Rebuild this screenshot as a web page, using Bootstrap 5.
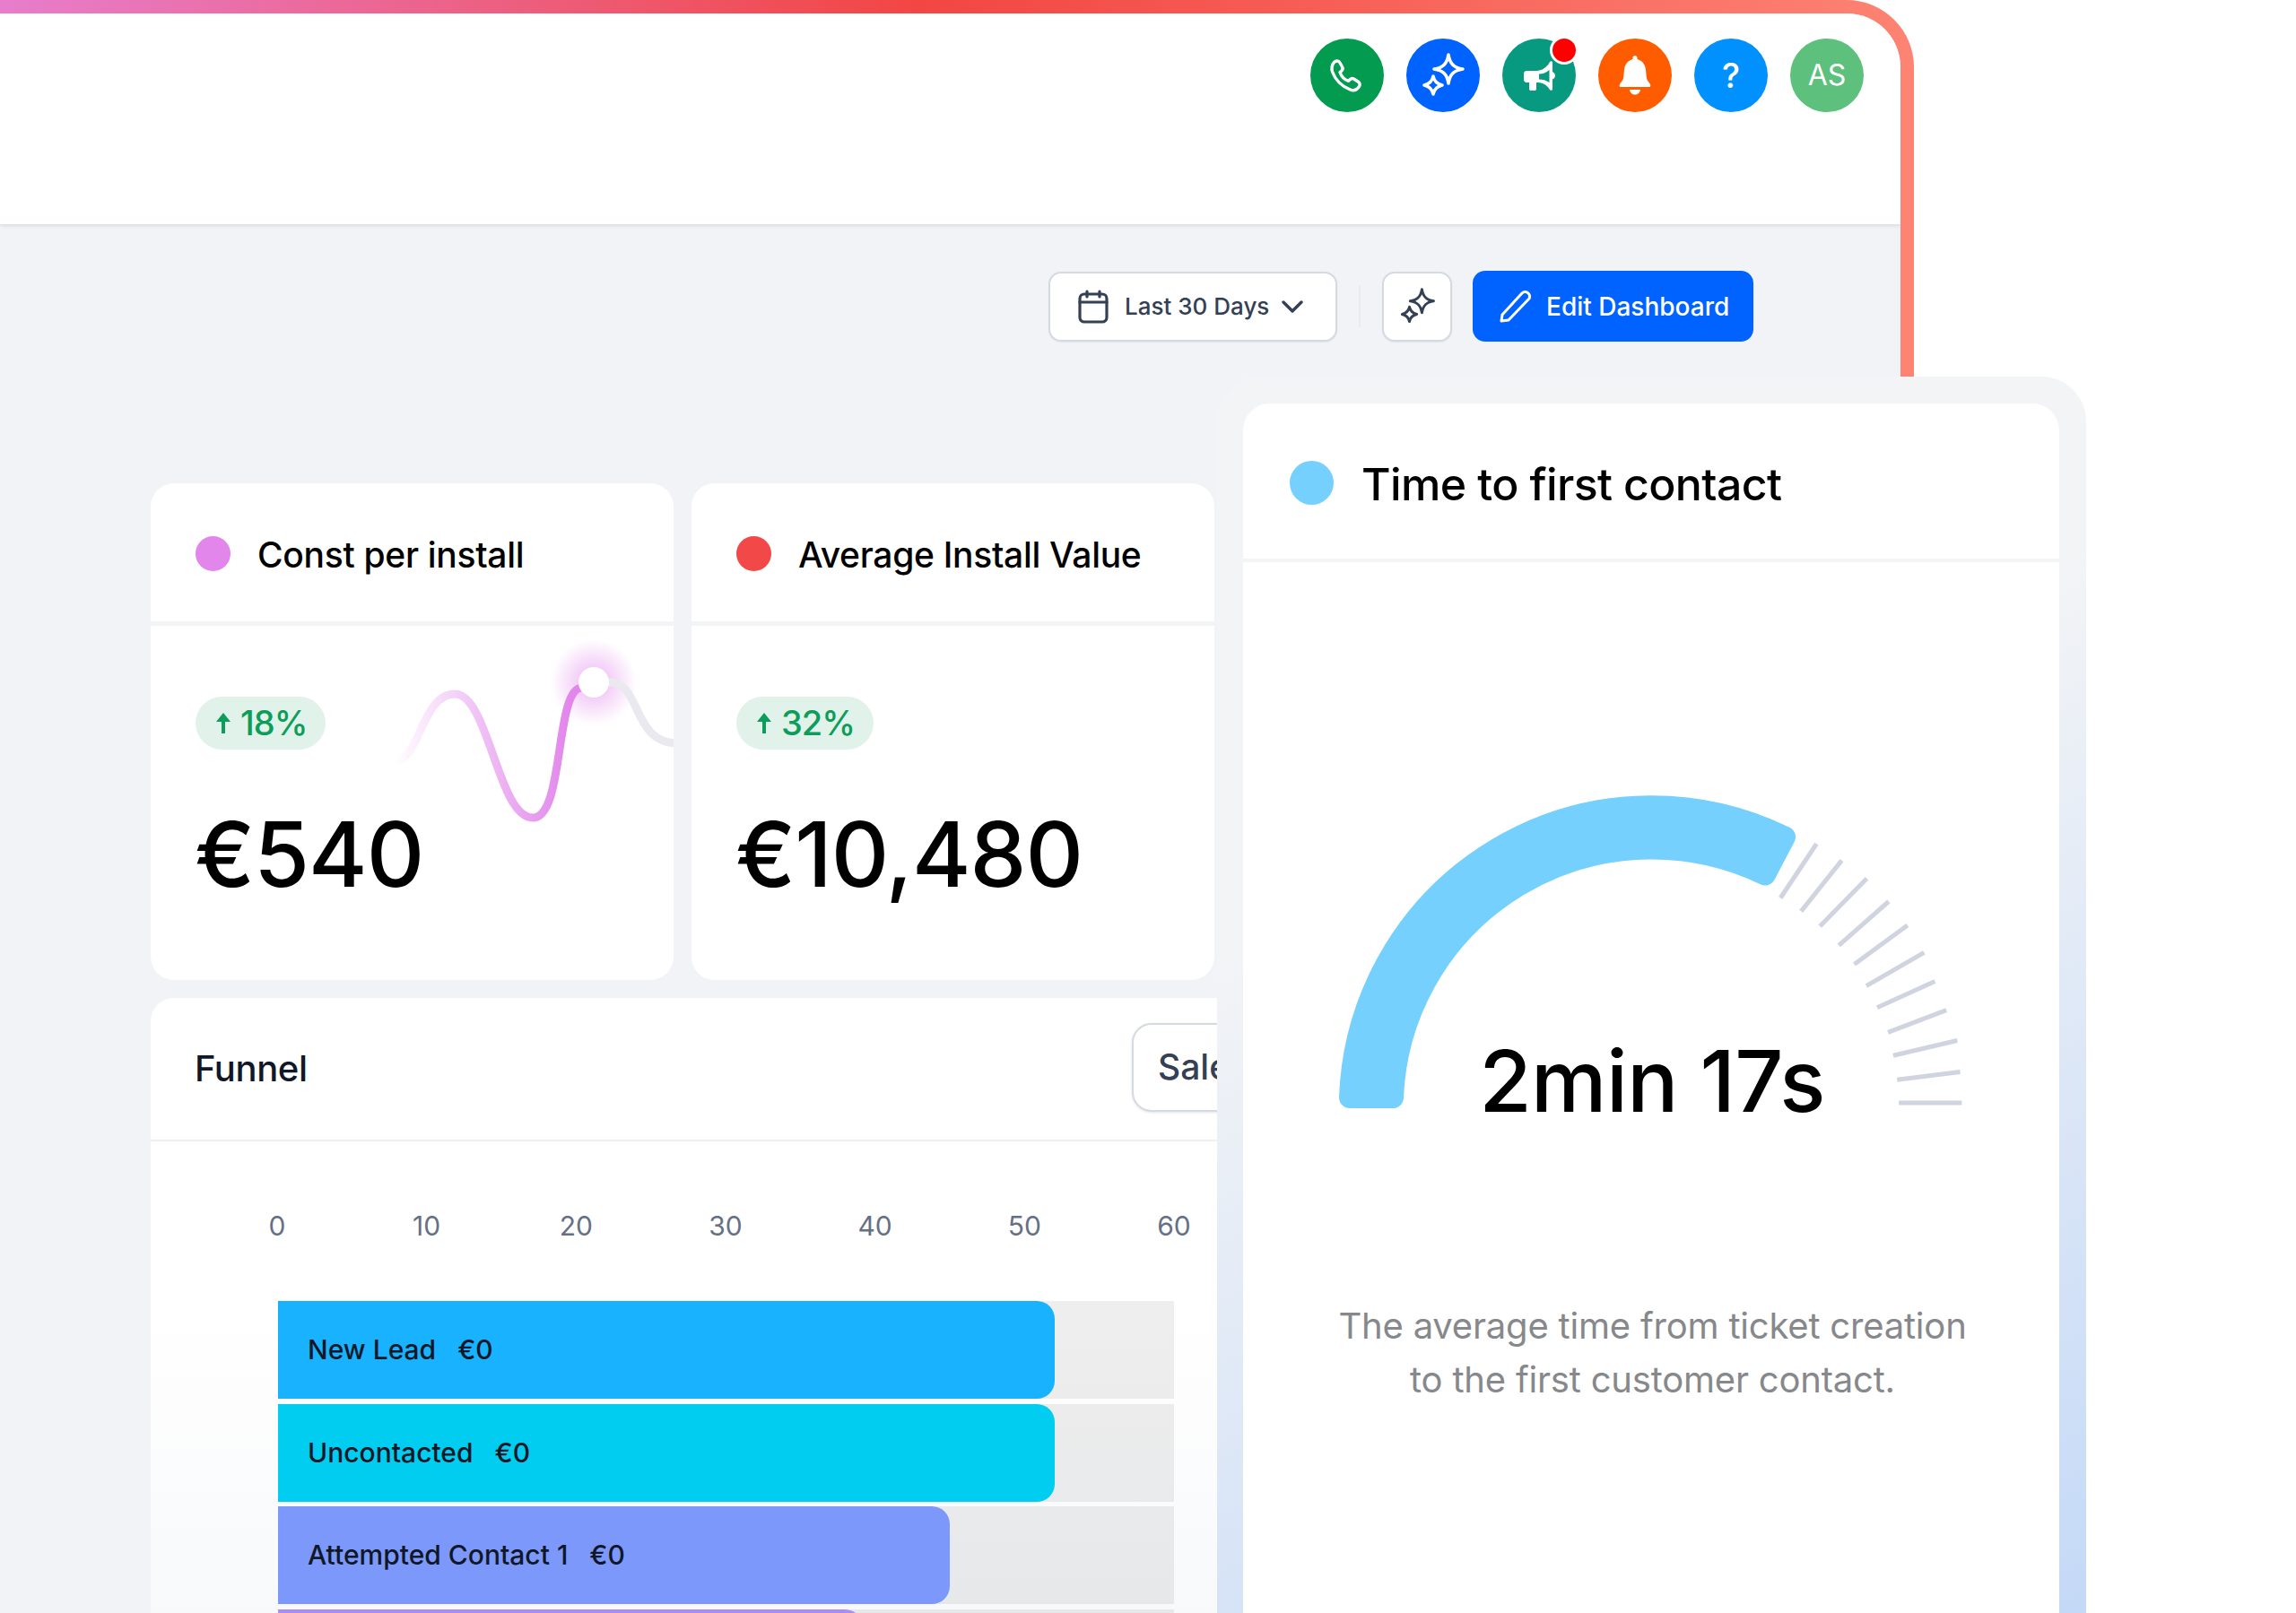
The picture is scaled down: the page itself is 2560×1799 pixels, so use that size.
<!DOCTYPE html>
<html lang="en">
<head>
  <meta charset="UTF-8">
  <meta name="viewport" content="width=device-width, initial-scale=1">
  <title>Dashboard</title>
  <link href="https://cdn.jsdelivr.net/npm/bootstrap@5.3.3/dist/css/bootstrap.min.css" rel="stylesheet">
  <style>
    html, body { height: 100%; }
    body { font-family: "Inter", "Liberation Sans", sans-serif; background: #fff; overflow: hidden; position: relative; }

    /* gradient frame round the app */
    .app-frame { width: 2134px; height: 1799px; padding: 15px 15px 0 0; border-top-right-radius: 75px; background: linear-gradient(90deg, #e77dcc 0, #f24642 1024px, #fd8373 2134px); }
    .app-inner { height: 100%; background: #f2f3f7; border-top-right-radius: 60px; overflow: hidden; }
    .top-bar { height: 235px; padding: 28px 41px 0 0; background: #fff; box-shadow: 0 2px 4px rgba(16, 24, 40, .1); gap: 25px; }
    .round-btn { width: 82px; height: 82px; color: #fff; }
    .round-btn svg { width: 82px; height: 82px; }
    .rb-phone { background: #029b4f; }
    .rb-spark { background: #0062ff; }
    .rb-mega { background: #089a80; }
    .rb-bell { background: #ff5c00; }
    .rb-help { background: #0091ff; font-size: 38px; font-weight: 500; }
    .rb-user { background: #5dc07d; font-size: 32px; }
    .notify-dot { width: 32px; height: 32px; left: 53px; top: -3px; background: #f00; border: 3px solid #fff; }

    .tool-row { padding: 52px 164px 0 0; align-items: center; }
    .tool-btn { height: 78px; background: #fff; border: 2px solid #d5d9e2; border-radius: 14px; color: #344054; font-size: 26px; font-weight: 500; box-shadow: 0 1px 2px rgba(16, 24, 40, .06); padding: 0; }
    .date-btn { width: 322px; gap: 18px; padding-left: 31px; }
    .date-btn .chev { margin-left: -4px; }
    .tool-sep { width: 2px; height: 47px; background: #e9ebf0; margin: 0 24px; }
    .spark-btn { width: 78px; }
    .edit-btn { width: 313px; height: 79px; margin-left: 23px; background: #0062ff; border: 0; border-radius: 14px; color: #fff; font-size: 28px; font-weight: 500; gap: 16px; padding: 0 0 0 30px; }

    .dash-wrap { padding: 158px 0 0 168px; width: 1408px; }
    .kpi-grid { grid-template-columns: 583px 583px; gap: 20px; }
    .kpi-card { height: 554px; border: 0; border-radius: 26px; overflow: hidden; }
    .kpi-head { height: 151px; padding: 3px 50px 0; gap: 30px; font-size: 39px; font-weight: 500; color: #000; border-bottom: 5px solid #f3f4f6; box-sizing: content-box; letter-spacing: -.3px; }
    .kpi-title { padding-top: 3px; }
    .legend-dot { width: 39px; height: 39px; }
    .kpi-pad { padding: 79px 50px 0; }
    .trend-pill { height: 59px; padding: 0 21px; gap: 9px; background: #e1f2ea; color: #0c9d5a; font-size: 38px; font-weight: 500; letter-spacing: -1px; }
    .kpi-num { font-size: 100px; font-weight: 500; line-height: 1; margin: 67px 0 0 -1px; color: #000; letter-spacing: -1px; }
    .spark-line { left: 262px; top: 162px; width: 321px; height: 240px; }

    .funnel-card { width: 1240px; margin-top: 20px; height: 800px; border: 0; border-radius: 26px 0 0 0; overflow: hidden; background: linear-gradient(180deg, #fff 340px, #f8f9fb 680px); }
    .funnel-head { height: 160px; padding: 0 0 0 49px; border-bottom: 2px solid #eef0f3; font-size: 40px; font-weight: 500; color: #101828; letter-spacing: -.4px; }
    .sale-select { width: 300px; height: 99px; background: #fff; border: 2px solid #d5d9e2; border-radius: 22px; padding-left: 27px; margin: -3px -154px 0 0; font-size: 39px; color: #344054; box-shadow: 0 1px 3px rgba(16, 24, 40, .12); letter-spacing: 0; }
    .funnel-chart { width: 999px; margin-left: 142px; padding-top: 77px; }
    .axis-row { height: 34px; margin: 0 0 67px -1px; font-size: 30px; color: #667085; line-height: 34px; }
    .axis-row span { width: 0; }
    .bar-rows { gap: 5.6px; }
    .bar-track { --bs-progress-bg: rgba(0, 0, 0, .067); height: 109px; border-radius: 0; font-size: 30px; }
    .bar-fill { padding-left: 33px; gap: 24px; color: #101828; font-weight: 500; border-radius: 0 20px 20px 0; }

    /* card floating over the dashboard */
    .float-card { left: 1357px; top: 420px; width: 969px; height: 1379px; padding: 30px 30px 0 29px; border-radius: 50px 50px 0 0; background: linear-gradient(155deg, #f3f4f6 35%, #c4d9f7 100%); }
    .float-inner { height: 100%; border: 0; border-radius: 30px 30px 0 0; overflow: hidden; }
    .float-head { height: 170px; padding: 3px 52px 0; gap: 31px; font-size: 50px; font-weight: 500; color: #000; border-bottom: 4px solid #f3f4f6; box-sizing: content-box; letter-spacing: -.62px; }
    .float-title { padding-top: 4px; }
    .float-dot { width: 49px; height: 49px; background: #75d0fd; }
    .gauge-box { width: 720px; height: 380px; margin: 243px 0 0 94px; }
    .gauge-box svg { width: 720px; height: 380px; display: block; }
    .gauge-num { left: 0; width: 724px; top: 279px; font-size: 95px; font-weight: 500; line-height: 1.2; color: #000; letter-spacing: -.6px; }
    .gauge-note { margin-top: 199px; font-size: 40px; line-height: 60px; color: #87888c; letter-spacing: -.2px; padding-left: 3px; }
  </style>
</head>
<body>
  <svg width="0" height="0" class="position-absolute">
    <symbol id="sparkles" viewBox="0 0 82 82">
      <path fill="none" stroke="currentColor" stroke-width="3.6" stroke-linejoin="round" d="M47 18C48.500 28 53 32.500 63 34C53 35.500 48.500 40 47 50C45.500 40 41 35.500 31 34C41 32.500 45.500 28 47 18Z"/>
      <path fill="none" stroke="currentColor" stroke-width="3.6" stroke-linejoin="round" d="M30 42C31 47.500 34 50.500 40 52C34 53.500 31 56.500 30 62C29 56.500 26 53.500 20 52C26 50.500 29 47.500 30 42Z"/>
    </symbol>
  </svg>

  <div class="app-frame">
    <div class="app-inner">
      <!-- header -->
      <div class="top-bar d-flex justify-content-end align-items-start position-relative">
        <div class="round-btn rb-phone rounded-circle">
          <svg viewBox="0 0 82 82"><path fill="none" stroke="#fff" stroke-width="3.4" stroke-linejoin="round" d="M26.5 26.5C28.5 24.5 31.5 24.5 33 27L35.5 31.5C36.5 33.2 36 35 34.6 36.2L33 37.5C34.5 42 38 45.8 42.5 47.4L44.2 45.7C45.5 44.4 47.2 44.2 48.8 45.2L53.2 48C55.5 49.5 55.8 52.2 54 54.2L52.5 55.8C50.5 57.8 47.5 58.3 44.5 57C34.5 53 28 46.5 24.5 37C23.4 33.8 24 29 26.5 26.5Z"/></svg>
        </div>
        <div class="round-btn rb-spark rounded-circle">
          <svg><use href="#sparkles"/></svg>
        </div>
        <div class="round-btn rb-mega rounded-circle position-relative">
          <svg viewBox="0 0 82 82"><path fill="#fff" fill-rule="evenodd" d="M27 36H38C44 36 50 32 53 26C54 24.5 56 25 56 27V37C58 38 59 40 59 41.5C59 43 58 44.5 56 45.5V56C56 58 54 58.5 53 57C50 52 46 49.5 40 49H38V56C38 57.5 37 58 36 58H32C31 58 30 57.5 30 56V49H27C25 49 24 47.5 24 46V39C24 37.5 25 36 27 36ZM41 39.5C45 39.5 49 38 52.5 35V49C49 46.5 45 45.5 41 45.5Z"/></svg>
          <span class="notify-dot rounded-circle position-absolute"></span>
        </div>
        <div class="round-btn rb-bell rounded-circle">
          <svg viewBox="0 0 82 82"><path fill="#fff" d="M41 19C42.500 19 43.500 20 43.500 21.500V23C49 24.500 52.500 29 53 35L53.800 43C54 45.500 55 47 57 49.500C58.500 51.500 59 54 57 54H25C23 54 23.500 51.500 25 49.500C27 47 28 45.500 28.200 43L29 35C29.500 29 33 24.500 38.500 23V21.500C38.500 20 39.500 19 41 19ZM35 57H47C46.500 60.500 44 62.500 41 62.500C38 62.500 35.500 60.500 35 57Z"/></svg>
        </div>
        <div class="round-btn rb-help rounded-circle d-flex align-items-center justify-content-center">?</div>
        <div class="round-btn rb-user rounded-circle d-flex align-items-center justify-content-center">AS</div>
      </div>

      <!-- toolbar -->
      <div class="tool-row d-flex justify-content-end">
        <button type="button" class="btn tool-btn date-btn d-flex align-items-center">
          <svg width="34" height="38" viewBox="0 0 34 38" fill="none" stroke="#344054" stroke-width="3.2" stroke-linecap="round" stroke-linejoin="round"><rect x="2" y="5" width="30" height="31" rx="5"/><path d="M2 14H32M10 2V8M24 2V8"/></svg>
          <span>Last 30 Days</span>
          <svg class="chev" width="24" height="14" viewBox="0 0 24 14" fill="none" stroke="#344054" stroke-width="3.4" stroke-linecap="round" stroke-linejoin="round"><path d="M2 2L12 12L22 2"/></svg>
        </button>
        <span class="tool-sep"></span>
        <button type="button" class="btn tool-btn spark-btn d-flex align-items-center justify-content-center">
          <svg width="67" height="67"><use href="#sparkles"/></svg>
        </button>
        <button type="button" class="btn edit-btn d-flex align-items-center">
          <svg width="36" height="36" viewBox="0 0 36 36" fill="none" stroke="#fff" stroke-width="3" stroke-linejoin="round"><path d="M2 34L3 27L25 3C27 1 30 1 32 3C34 5 34 7 33 9L10 33Z"/></svg>
          <span>Edit Dashboard</span>
        </button>
      </div>

      <div class="dash-wrap">
        <div class="kpi-grid d-grid">
          <div class="card kpi-card position-relative">
            <div class="kpi-head d-flex align-items-center"><span class="legend-dot rounded-circle" style="background:#e286eb"></span><span class="kpi-title">Const per install</span></div>
            <div class="kpi-pad">
              <span class="trend-pill d-inline-flex align-items-center rounded-pill">
                <svg width="20" height="23" viewBox="0 0 20 23" fill="#0c9d5a"><path d="M10 0L18 10H12V23H8V10H2Z"/></svg>18%</span>
              <div class="kpi-num">€540</div>
            </div>
            <svg class="spark-line position-absolute" viewBox="0 0 321 240" fill="none">
              <defs>
                <linearGradient id="sparkFade" gradientUnits="userSpaceOnUse" x1="10" y1="0" x2="205" y2="0">
                  <stop offset="0" stop-color="#e286eb" stop-opacity="0"/>
                  <stop offset=".35" stop-color="#e286eb" stop-opacity=".38"/>
                  <stop offset="1" stop-color="#e286eb"/>
                </linearGradient>
                <radialGradient id="sparkGlow">
                  <stop offset=".3" stop-color="#e28bec" stop-opacity=".45"/>
                  <stop offset="1" stop-color="#e28bec" stop-opacity="0"/>
                </radialGradient>
              </defs>
              <circle cx="232" cy="60" r="48" fill="url(#sparkGlow)"/>
              <path stroke="url(#sparkFade)" stroke-width="9" d="M10 148C38 148 40 73 77 73C115 73 125 211 164 211C200 211 188 66 219 66"/>
              <path stroke="#e9e9ef" stroke-width="9" stroke-linecap="round" d="M250 60C285 60 275 128 325 128"/>
              <circle cx="232" cy="60" r="17" fill="#fff"/>
            </svg>
          </div>
          <div class="card kpi-card">
            <div class="kpi-head d-flex align-items-center"><span class="legend-dot rounded-circle" style="background:#f24848"></span><span class="kpi-title">Average Install Value</span></div>
            <div class="kpi-pad">
              <span class="trend-pill d-inline-flex align-items-center rounded-pill">
                <svg width="20" height="23" viewBox="0 0 20 23" fill="#0c9d5a"><path d="M10 0L18 10H12V23H8V10H2Z"/></svg>32%</span>
              <div class="kpi-num">€10,480</div>
            </div>
          </div>
        </div>

        <div class="card funnel-card">
          <div class="funnel-head d-flex align-items-center justify-content-between">
            <span>Funnel</span>
            <div class="sale-select d-flex align-items-center">Sales</div>
          </div>
          <div class="funnel-chart">
            <div class="axis-row d-flex justify-content-between">
              <span class="d-flex justify-content-center">0</span>
              <span class="d-flex justify-content-center">10</span>
              <span class="d-flex justify-content-center">20</span>
              <span class="d-flex justify-content-center">30</span>
              <span class="d-flex justify-content-center">40</span>
              <span class="d-flex justify-content-center">50</span>
              <span class="d-flex justify-content-center">60</span>
            </div>
            <div class="bar-rows d-flex flex-column">
              <div class="progress bar-track"><div class="progress-bar bar-fill flex-row align-items-center justify-content-start" style="width:86.7%;background:#18b2ff"><span>New Lead</span><span>€0</span></div></div>
              <div class="progress bar-track"><div class="progress-bar bar-fill flex-row align-items-center justify-content-start" style="width:86.7%;background:#00cdf0"><span>Uncontacted</span><span>€0</span></div></div>
              <div class="progress bar-track"><div class="progress-bar bar-fill flex-row align-items-center justify-content-start" style="width:75%;background:#7c98fa"><span>Attempted Contact 1</span><span>€0</span></div></div>
              <div class="progress bar-track"><div class="progress-bar bar-fill flex-row align-items-center justify-content-start" style="width:65.3%;background:#a98cf6"></div></div>
            </div>
          </div>
        </div>
      </div>
    </div>
  </div>

  <!-- time to first contact -->
  <div class="float-card position-absolute">
    <div class="card float-inner">
      <div class="float-head d-flex align-items-center"><span class="float-dot rounded-circle"></span><span class="float-title">Time to first contact</span></div>
      <div class="gauge-box position-relative">
        <svg viewBox="1480 870 720 380">
          <path fill="#75d0fd" stroke="#75d0fd" stroke-width="24" stroke-linejoin="round" d="M1505 1224A337 337 0 0 1 1990 933.500L1968 975.500A289 289 0 0 0 1553 1224Z"/>
          <g stroke="#d0d3e0" stroke-width="5">
            <path d="M2025.400 941.200L1985.200 1001.500"/>
            <path d="M2053.500 959.600L2008.200 1016.400"/>
            <path d="M2081.500 979.700L2029.200 1033.100"/>
            <path d="M2105.800 1005.500L2050.300 1054.300"/>
            <path d="M2126.800 1031.900L2067.500 1075.600"/>
            <path d="M2145.300 1062.400L2080.900 1099.700"/>
            <path d="M2157.400 1094.500L2093 1123.800"/>
            <path d="M2170.200 1126.700L2105.100 1151.300"/>
            <path d="M2182.300 1160.500L2110.900 1177.200"/>
            <path d="M2185.500 1195.500L2115.300 1204.200"/>
            <path d="M2187.400 1230L2117.200 1230"/>
          </g>
        </svg>
        <div class="gauge-num position-absolute text-center">2min 17s</div>
      </div>
      <p class="gauge-note text-center mb-0">The average time from ticket creation<br>to the first customer contact.</p>
    </div>
  </div>

  <script src="https://cdn.jsdelivr.net/npm/bootstrap@5.3.3/dist/js/bootstrap.bundle.min.js"></script>
</body>
</html>
